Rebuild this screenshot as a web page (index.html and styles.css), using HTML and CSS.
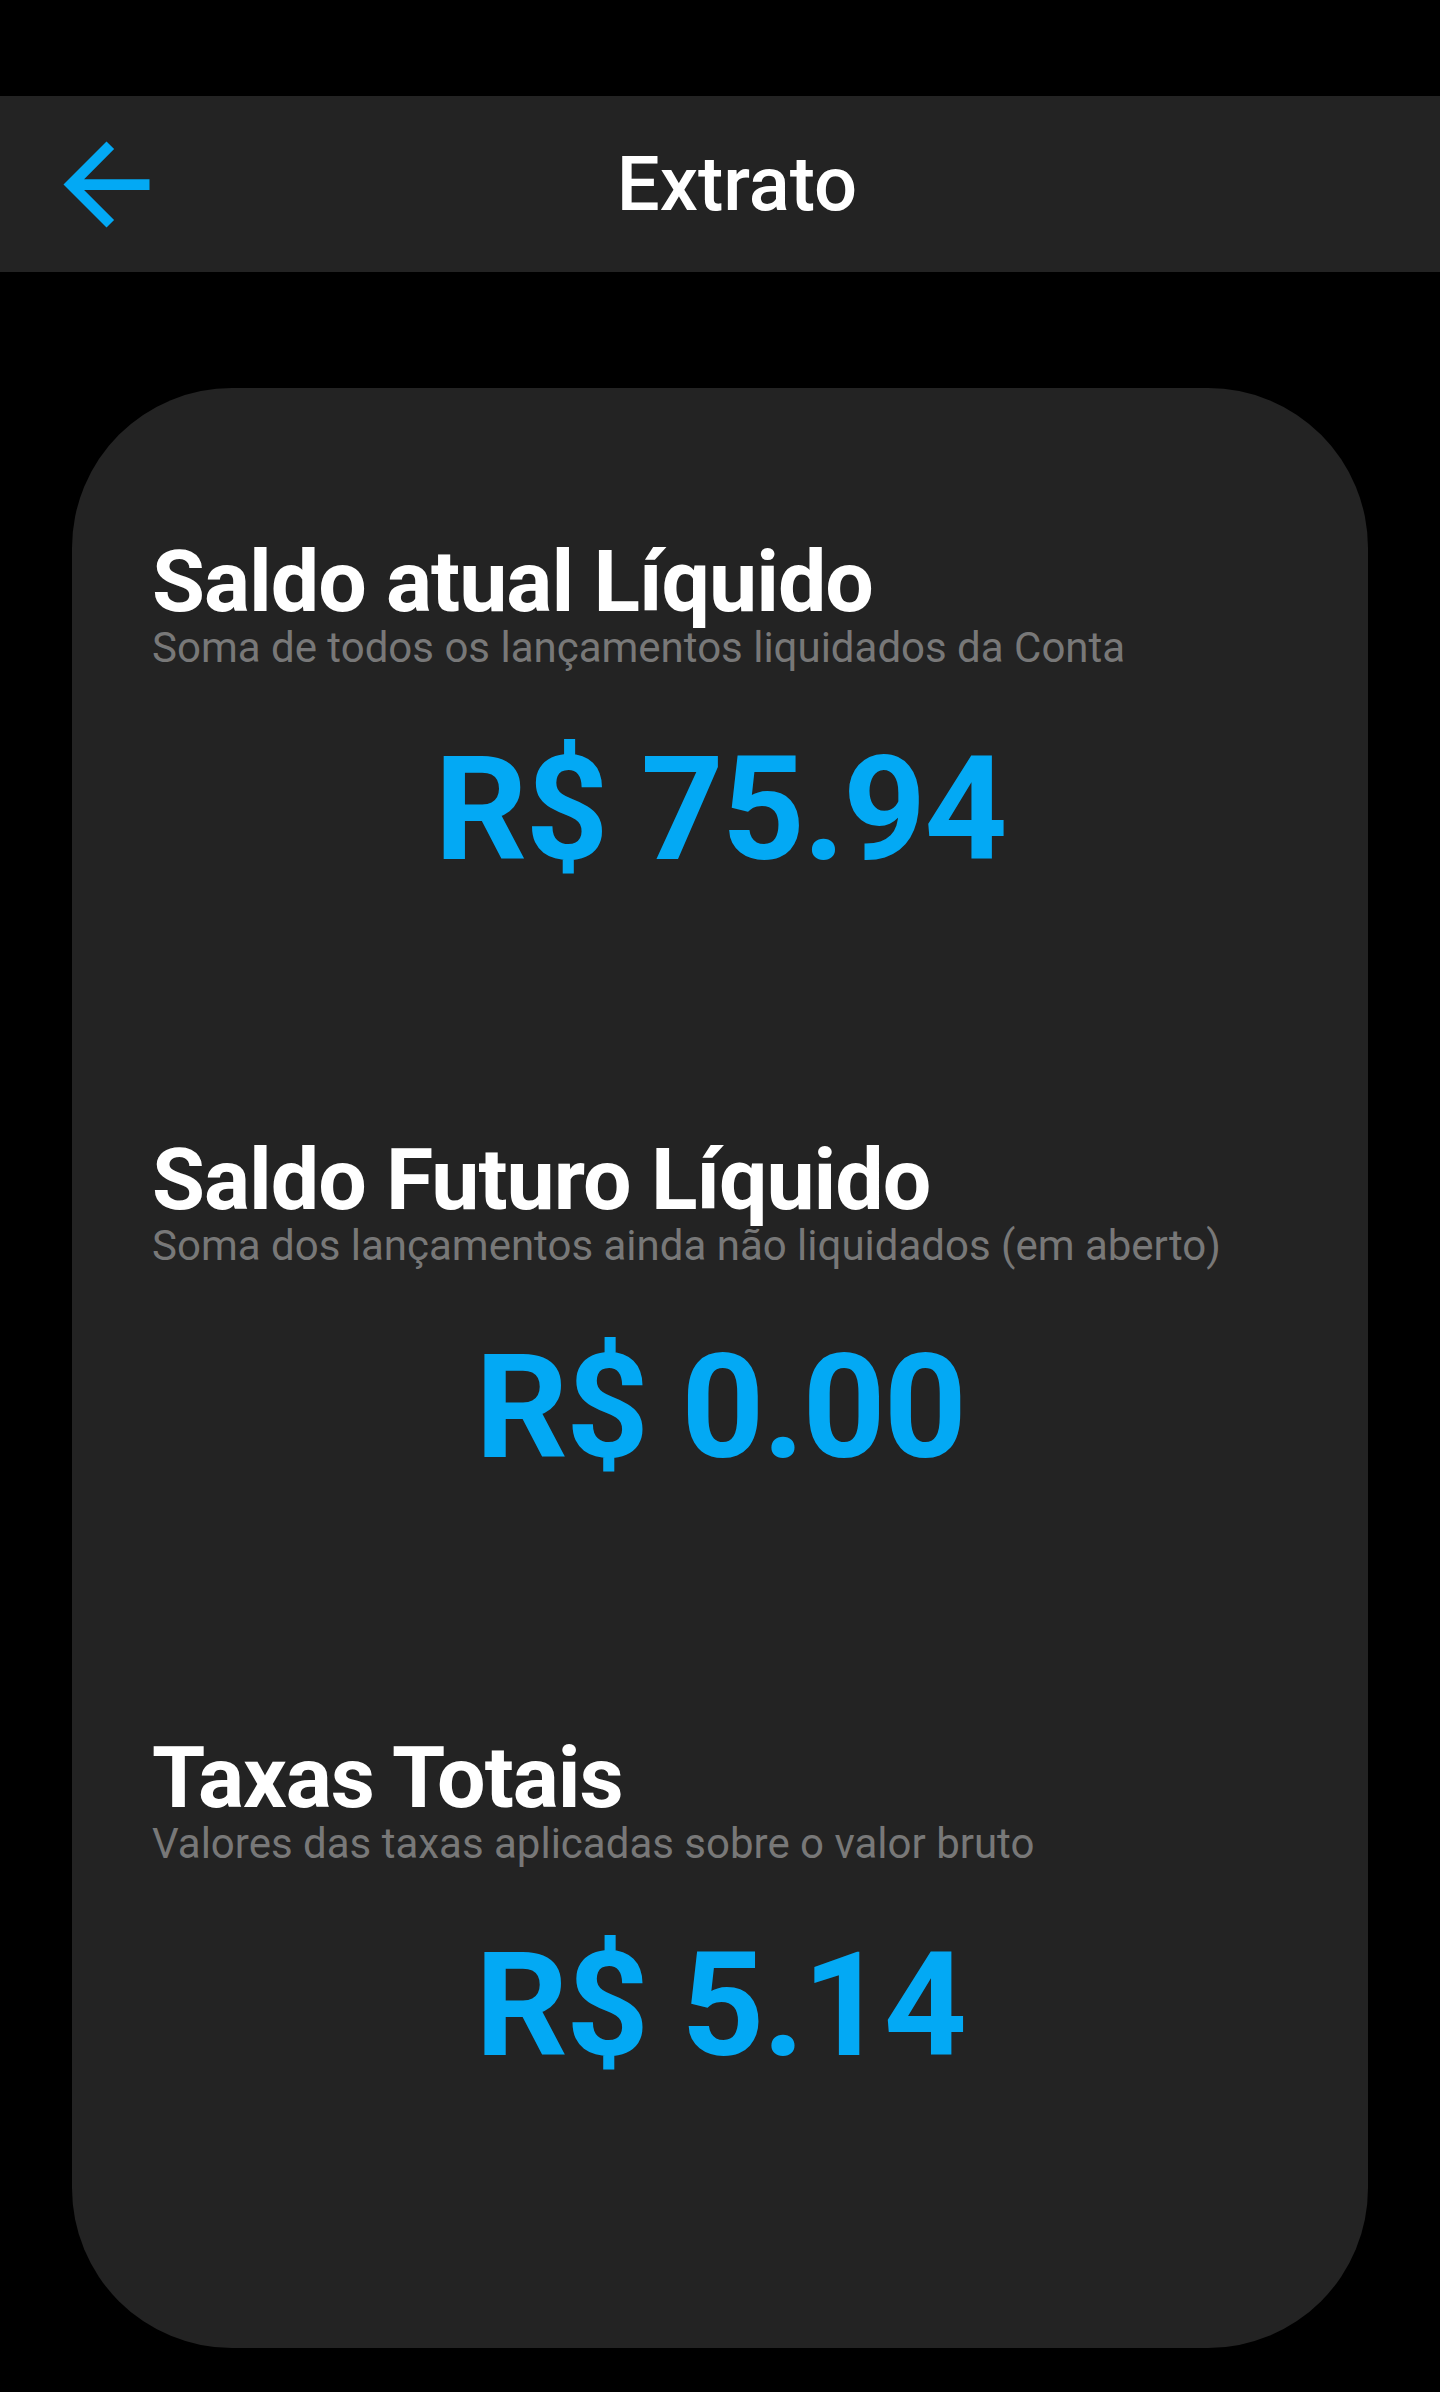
FILE: index.html
```html
<!DOCTYPE html>
<html lang="pt-BR">
<head>
    <meta charset="UTF-8">
    <meta name="viewport" content="width=device-width, initial-scale=1.0">
    <title>Extrato</title>
    <link rel="stylesheet" href="styles.css">
</head>
<body>
    <div class="topbar"></div>
    <header class="appbar">
        <button class="back" aria-label="Voltar">
            <svg viewBox="0 0 24 24" width="129" height="129">
                <path d="M20 11H7.83l5.59-5.59L12 4l-8 8 8 8 1.41-1.41L7.83 13H20v-2z" fill="#03a9f4"/>
            </svg>
        </button>
        <h1 class="appbar-title">Extrato</h1>
    </header>

    <main class="card">
        <section class="balance">
            <h2 class="balance-title">Saldo atual Líquido</h2>
            <p class="balance-sub">Soma de todos os lançamentos liquidados da Conta</p>
            <div class="balance-value">R$ 75.94</div>
        </section>
        <section class="balance">
            <h2 class="balance-title">Saldo Futuro Líquido</h2>
            <p class="balance-sub">Soma dos lançamentos ainda não liquidados (em aberto)</p>
            <div class="balance-value">R$ 0.00</div>
        </section>
        <section class="balance">
            <h2 class="balance-title">Taxas Totais</h2>
            <p class="balance-sub">Valores das taxas aplicadas sobre o valor bruto</p>
            <div class="balance-value">R$ 5.14</div>
        </section>
    </main>
</body>
</html>
```

FILE: styles.css
```css
body {
    margin: 0;
    background: #000;
    font-family: Roboto, "Liberation Sans", sans-serif;
    color: #fff;
}
.topbar {
    height: 96px;
}
.appbar {
    height: 176px;
    background: #232323;
    display: flex;
    align-items: center;
    padding-left: 42px;
    padding-right: 137px;
}
.back {
    background: none;
    border: none;
    padding: 0;
    width: 129px;
    height: 129px;
    display: flex;
    cursor: pointer;
}
.appbar-title {
    flex: 1;
    margin: 0;
    text-align: center;
    font-size: 76px;
    font-weight: 500;
    line-height: 1;
}
.card {
    margin: 116px 72px 0;
    background: #232323;
    border-radius: 160px;
    padding: 146px 80px 253px;
    display: flex;
    flex-direction: column;
    gap: 233px;
}
.balance-title {
    margin: 0;
    font-size: 86px;
    font-weight: 700;
    line-height: 96px;
    letter-spacing: -1px;
}
.balance-sub {
    margin: 0;
    font-size: 42px;
    line-height: 36px;
    color: #787878;
}
.balance-value {
    margin-top: 53px;
    text-align: center;
    font-size: 145px;
    font-weight: 700;
    line-height: 180px;
    letter-spacing: -2px;
    color: #03a9f4;
}
```
